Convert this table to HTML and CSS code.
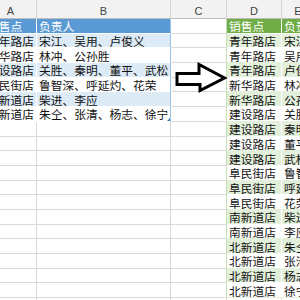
FILE: index.html
```html
<!DOCTYPE html>
<html lang="zh">
<head>
<meta charset="utf-8">
<link rel="stylesheet" href="styles.css">
</head>
<body>
<div class="wrap">
<table class="sheet">
<colgroup><col class="ca"><col class="cb"><col class="cc"><col class="cd"><col class="ce"></colgroup>
<thead>
<tr class="colhead"><th>A</th><th>B</th><th>C</th><th>D</th><th>E</th></tr>
</thead>
<tbody>
<tr><td class="bh">销售点</td><td class="bh br">负责人</td><td class="gl"></td><td class="gh">销售点</td><td class="gh">负责人</td></tr>
<tr><td class="bo">青年路店</td><td class="bo br">宋江、吴用、卢俊义</td><td class="gl"></td><td class="go">青年路店</td><td class="go">宋江</td></tr>
<tr><td class="bw">新华路店</td><td class="bw br">林冲、公孙胜</td><td class="gl"></td><td class="gw">青年路店</td><td class="gw">吴用</td></tr>
<tr><td class="bo">建设路店</td><td class="bo br">关胜、秦明、董平、武松</td><td class="gl"></td><td class="go">青年路店</td><td class="go">卢俊义</td></tr>
<tr><td class="bw">阜民街店</td><td class="bw br">鲁智深、呼延灼、花荣</td><td class="gl"></td><td class="gw">新华路店</td><td class="gw">林冲</td></tr>
<tr><td class="bo">南新道店</td><td class="bo br">柴进、李应</td><td class="gl"></td><td class="go">新华路店</td><td class="go">公孙胜</td></tr>
<tr><td class="bw">北新道店</td><td class="bw br last">朱仝、张清、杨志、徐宁<span class="handle"></span></td><td class="gl"></td><td class="gw">建设路店</td><td class="gw">关胜</td></tr>
<tr><td></td><td></td><td class="gl"></td><td class="go">建设路店</td><td class="go">秦明</td></tr>
<tr><td></td><td></td><td class="gl"></td><td class="gw">建设路店</td><td class="gw">董平</td></tr>
<tr><td></td><td></td><td class="gl"></td><td class="go">建设路店</td><td class="go">武松</td></tr>
<tr><td></td><td></td><td class="gl"></td><td class="gw">阜民街店</td><td class="gw">鲁智深</td></tr>
<tr><td></td><td></td><td class="gl"></td><td class="go">阜民街店</td><td class="go">呼延灼</td></tr>
<tr><td></td><td></td><td class="gl"></td><td class="gw">阜民街店</td><td class="gw">花荣</td></tr>
<tr><td></td><td></td><td class="gl"></td><td class="go">南新道店</td><td class="go">柴进</td></tr>
<tr><td></td><td></td><td class="gl"></td><td class="gw">南新道店</td><td class="gw">李应</td></tr>
<tr><td></td><td></td><td class="gl"></td><td class="go">北新道店</td><td class="go">朱仝</td></tr>
<tr><td></td><td></td><td class="gl"></td><td class="gw">北新道店</td><td class="gw">张清</td></tr>
<tr><td></td><td></td><td class="gl"></td><td class="go">北新道店</td><td class="go">杨志</td></tr>
<tr><td></td><td></td><td class="gl"></td><td class="gw">北新道店</td><td class="gw">徐宁</td></tr>
<tr><td></td><td></td><td></td><td></td><td></td></tr>
</tbody>
</table>
<svg class="arrow" viewBox="170 55 60 45" width="60" height="45" xmlns="http://www.w3.org/2000/svg">
<polygon points="177,73.5 199,73.5 199,64.5 224.5,78 200,90.5 200,84.5 177,84.5" fill="#fff" stroke="#000" stroke-width="3" stroke-linejoin="miter"/>
</svg>
</div>
</body>
</html>
```
FILE: styles.css
```css
html, body {
  margin: 0;
  padding: 0;
  background: #fff;
}
body {
  width: 300px;
  height: 300px;
  overflow: hidden;
}
.wrap {
  position: relative;
  width: 300px;
  height: 300px;
}
.sheet {
  border-collapse: separate;
  border-spacing: 0;
  table-layout: fixed;
  width: 330px;
  margin-left: -15px;
  font-family: "Noto Sans CJK SC", "Noto Sans", sans-serif;
  font-size: 11.75px;
  color: #111;
}
.ca { width: 52px; }
.cb { width: 134px; }
.cc { width: 56px; }
.cd { width: 55px; }
.ce { width: 33px; }
.colhead th {
  height: 19px;
  box-sizing: border-box;
  padding: 5px 0 0 0;
  background: #f2f2f2;
  border-right: 1px solid #d4d4d4;
  border-bottom: 1px solid #bdbdbd;
  font-family: "Liberation Sans", Arial, sans-serif;
  font-weight: normal;
  font-size: 11px;
  line-height: 13px;
  color: #444;
  text-align: center;
  vertical-align: middle;
}
td {
  height: 14.7px;
  box-sizing: border-box;
  padding: 0 0 0 2px;
  border-right: 1px solid #d9d9d9;
  border-bottom: 1px solid #d9d9d9;
  line-height: 13px;
  white-space: nowrap;
  overflow: hidden;
  vertical-align: middle;
  position: relative;
}
.bh {
  background: #5b9bd5;
  color: #fff;
  border-color: #fff;
}
.bo {
  background: #ddebf7;
  border-color: #fff;
}
.bw {
  background: #fff;
  border-color: #fff;
}
.br {
  border-right-color: #9bc2e6;
}
.gh {
  background: #70ad47;
  color: #fff;
  border-color: #fff;
}
.go {
  background: #e2efda;
  border-color: #fff;
}
.gw {
  background: #fff;
  border-color: #e2efda;
  border-right-color: #fff;
}
.gl {
  border-right-color: #c6e0b4;
}
.handle {
  position: absolute;
  right: 0;
  bottom: 0;
  width: 0;
  height: 0;
  border-left: 3px solid transparent;
  border-bottom: 3px solid #2f75b5;
}
.arrow {
  position: absolute;
  left: 170px;
  top: 55px;
}
```
